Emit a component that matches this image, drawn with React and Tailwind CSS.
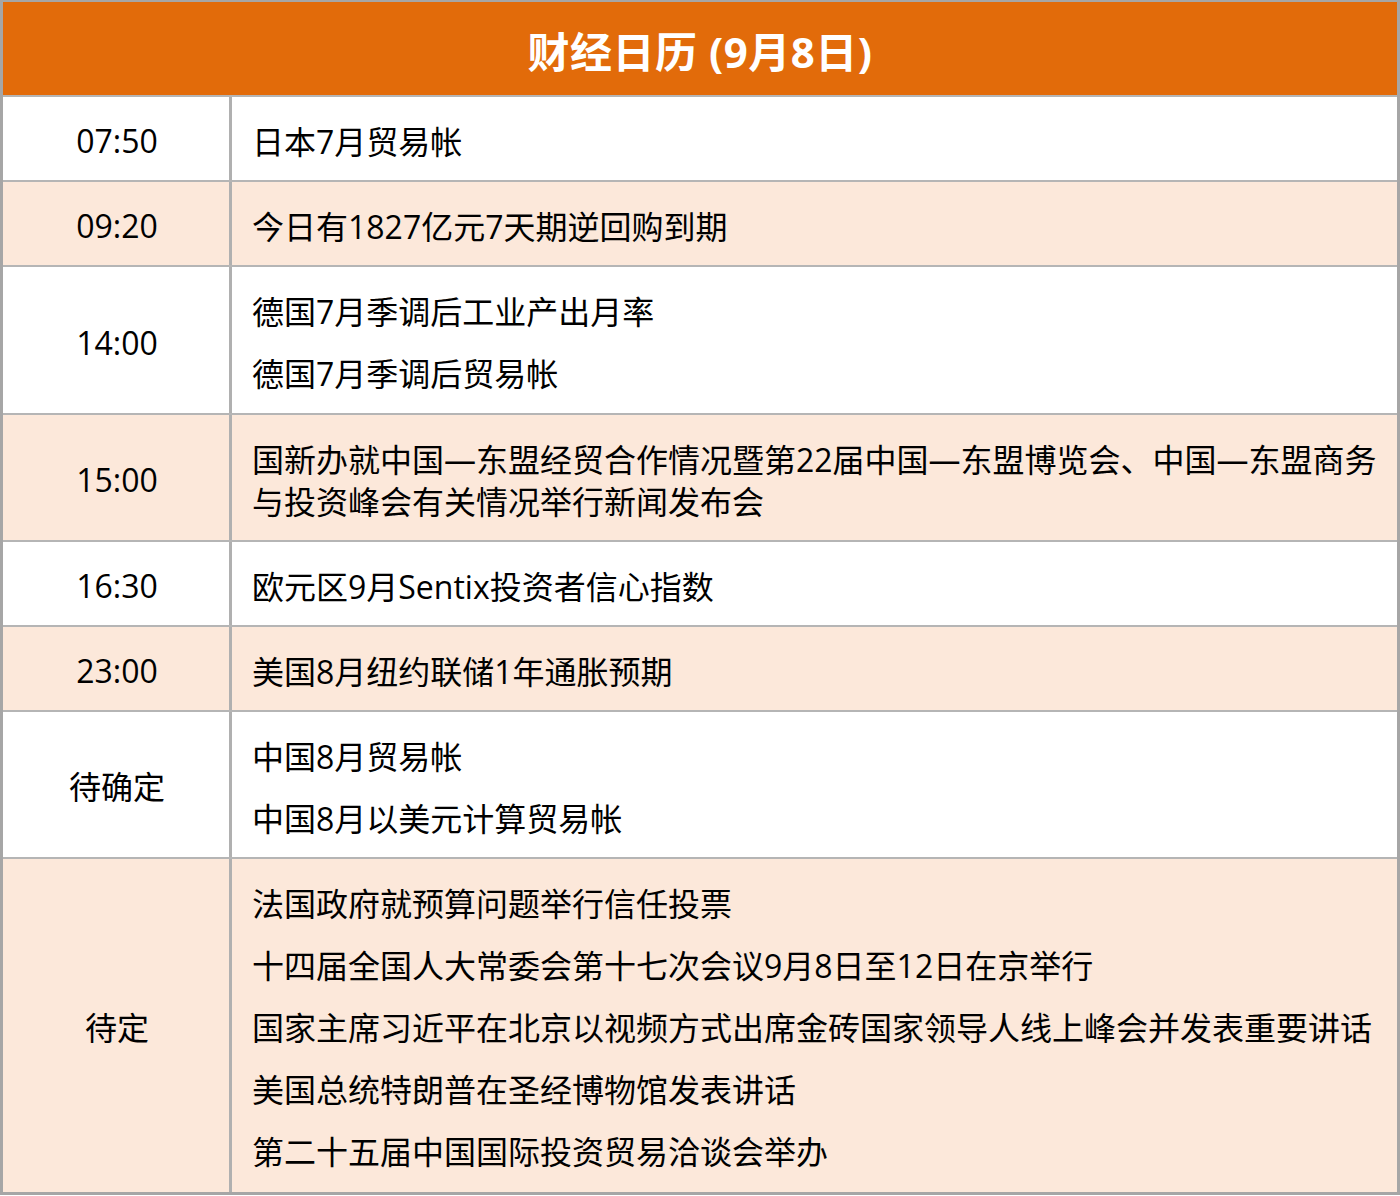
import React from "react";

const rows = [
  { time: "07:50", items: ["日本7月贸易帐"] },
  { time: "09:20", items: ["今日有1827亿元7天期逆回购到期"], tint: true },
  { time: "14:00", items: ["德国7月季调后工业产出月率", "德国7月季调后贸易帐"], pad: "pb-[18px]" },
  {
    time: "15:00",
    items: [
      <>
        国新办就中国—东盟经贸合作情况暨第22届中国—东盟博览会、中国—东盟商务
        <br />
        与投资峰会有关情况举行新闻发布会
      </>,
    ],
    tint: true,
  },
  { time: "16:30", items: ["欧元区9月Sentix投资者信心指数"] },
  { time: "23:00", items: ["美国8月纽约联储1年通胀预期"], tint: true },
  { time: "待确定", items: ["中国8月贸易帐", "中国8月以美元计算贸易帐"] },
  {
    time: "待定",
    items: [
      "法国政府就预算问题举行信任投票",
      "十四届全国人大常委会第十七次会议9月8日至12日在京举行",
      "国家主席习近平在北京以视频方式出席金砖国家领导人线上峰会并发表重要讲话",
      "美国总统特朗普在圣经博物馆发表讲话",
      "第二十五届中国国际投资贸易洽谈会举办",
    ],
    tint: true,
    pad: "pb-[19px]",
  },
];

export default function App() {
  return (
    <div
      className="w-[1400px] bg-white text-black"
      style={{ fontFamily: '"Open Sans", "Noto Sans CJK SC", sans-serif' }}
    >
      <div className="border-x-[3px] border-t-2 border-b-[3px] border-[#a6a6a6]">
        <div className="h-[95px] bg-[#e26b0a] flex items-center justify-center border-b-2 border-[#b5b5b5]">
          <h1 className="text-white font-bold text-[42px] leading-none tracking-[0.5px] pt-[6px]">
            财经日历 (9月8日)
          </h1>
        </div>
        {rows.map((row, i) => (
          <div
            key={i}
            className={`flex ${i > 0 ? "border-t-2 border-[#b5b5b5]" : ""} ${
              row.tint ? "bg-[#fce8da]" : "bg-white"
            }`}
          >
            <div className="w-[229px] shrink-0 flex items-center justify-center text-[32px] leading-[42px] border-r-[3px] border-[#b0b0b0] pl-[2px] pt-[5px]">
              {row.time}
            </div>
            <div
              className={`flex-1 pt-[24px] pl-[20px] pr-1 flex flex-col gap-[20px] text-[32px] leading-[42px] ${
                row.pad || "pb-[17px]"
              }`}
            >
              {row.items.map((t, j) => (
                <p key={j}>{t}</p>
              ))}
            </div>
          </div>
        ))}
      </div>
    </div>
  );
}
